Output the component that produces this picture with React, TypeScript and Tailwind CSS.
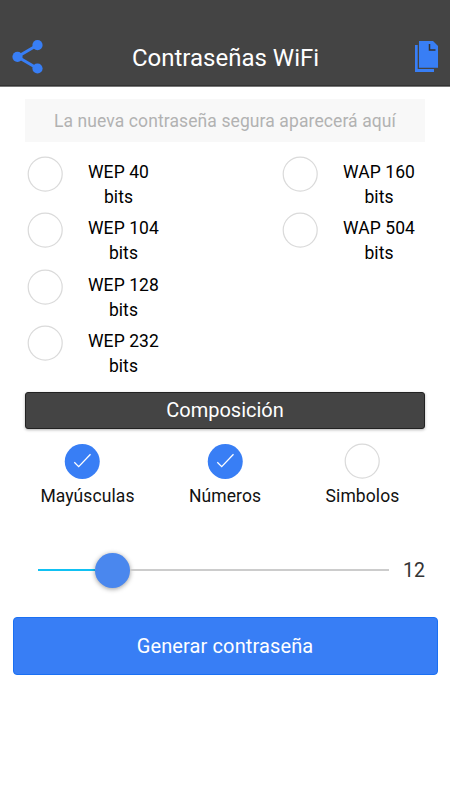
import React from "react";

const Circle = ({ checked = false }: { checked?: boolean }) =>
  checked ? (
    <svg viewBox="0 0 35 35" className="size-[35px] shrink-0 overflow-visible" fill="none">
      <circle cx="17.25" cy="17.5" r="17.5" fill="#387ef5" />
      <path d="M9.3 18.2l4.4 4.4L25.5 10.2" stroke="#fff" strokeWidth="1.3" />
    </svg>
  ) : (
    <svg viewBox="0 0 35 35" className="size-[35px] shrink-0 overflow-visible" fill="#fff">
      <circle cx="17.2" cy="17.1" r="17" stroke="#dadada" strokeWidth="1.2" />
    </svg>
  );

const Option = ({ label }: { label: string }) => (
  <div className="flex h-[56.25px] items-start">
    <Circle />
    <div className="ml-[25.5px] mt-[3px] text-center text-[17.5px] leading-[25px] tracking-[0.08px] text-black">
      {label}
      <br />
      bits
    </div>
  </div>
);

const Check = ({ label, checked = false }: { label: string; checked?: boolean }) => (
  <div className="flex w-[137.5px] flex-col items-center">
    <Circle checked={checked} />
    <span className="mt-[4px] text-[17.5px] leading-[26px] tracking-[0.1px] text-[#111]">{label}</span>
  </div>
);

export default function App() {
  return (
    <main className="h-[800px] w-[450px] overflow-hidden bg-white font-['Roboto','Noto_Sans',sans-serif]">
      <header className="flex h-[87px] border-b border-[#777] bg-[#444] px-[12px] shadow-[inset_0_-1px_0_#333]">
        <svg viewBox="0 0 31 34" className="mt-[40px] h-[34px] w-[31px]" fill="#387ef5">
          <path d="M25.5 5L5.5 16.8l20 11.7" fill="none" stroke="#387ef5" strokeWidth="3" />
          <circle cx="25.5" cy="5.1" r="5.1" />
          <circle cx="5.5" cy="16.8" r="5.1" />
          <circle cx="25.5" cy="28.5" r="5.1" />
        </svg>
        <h1 className="mt-[43px] flex-1 pl-[1px] text-center text-[24px] leading-[30px] text-white">Contraseñas WiFi</h1>
        <svg viewBox="0 0 23 31" className="ml-[8px] mt-[41px] h-[31px] w-[23px]" fill="#387ef5">
          <path d="M0 4h2.7v24H19V31H0z" />
          <path d="M4 0h14l5 5v21.7H4z" />
          <path d="M14.5 3v6h6" fill="none" stroke="#333" strokeWidth="1.5" />
        </svg>
      </header>

      <div className="mx-[25px] mt-[12px] flex h-[43px] items-center justify-center bg-[#f8f8f8] pt-px text-[17.5px] tracking-[0.1px] text-[#b2b2b2]">
        La nueva contraseña segura aparecerá aquí
      </div>

      <section className="mt-[15px] flex h-[225px] pl-[27.5px]">
        <div className="w-[255px]">
          <Option label="WEP 40" />
          <Option label="WEP 104" />
          <Option label="WEP 128" />
          <Option label="WEP 232" />
        </div>
        <div>
          <Option label="WAP 160" />
          <Option label="WAP 504" />
        </div>
      </section>

      <div className="mx-[25px] mt-[10px] flex h-[37px] items-center justify-center rounded-[3px] border border-[#222] bg-[#444] pb-px text-[20px] text-white shadow-[0_1px_3px_rgba(0,0,0,0.3)]">
        Composición
      </div>

      <section className="mt-[15px] flex justify-center">
        <div className="flex w-[137.5px] flex-col items-center">
          <span className="mr-[10px] flex">
            <Circle checked />
          </span>
          <span className="mt-[4px] text-[17.5px] leading-[26px] tracking-[0.1px] text-[#111]">Mayúsculas</span>
        </div>
        <Check label="Números" checked />
        <Check label="Simbolos" />
      </section>

      <section className="mt-[43px] flex h-[36px] items-center pl-[37.5px]">
        <div className="flex w-[351.5px] items-center">
          <span className="h-[2.5px] w-[57.5px] bg-[#11c1f3]" />
          <span className="size-[35px] rounded-full bg-[#4a87ee] shadow-[0_1px_5px_rgba(0,0,0,0.4)]" />
          <span className="h-[2.5px] flex-1 bg-[#ccc]" />
        </div>
        <span className="ml-[14px] pt-px text-[19.5px] text-[#333]">12</span>
      </section>

      <button className="ml-[12.5px] mt-[29px] flex h-[58px] w-[425px] items-center justify-center rounded-[4px] border border-[#1a70f3] bg-[#387ef5] text-[20px] tracking-[0.12px] text-white">
        Generar contraseña
      </button>
    </main>
  );
}
